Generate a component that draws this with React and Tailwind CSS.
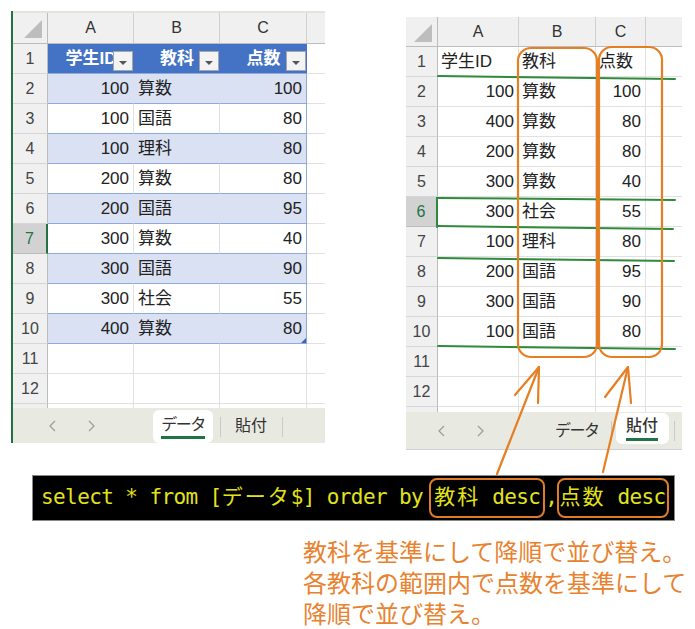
import React from "react";

const leftRows = [
  ["100", "算数", "100"],
  ["100", "国語", "80"],
  ["100", "理科", "80"],
  ["200", "算数", "80"],
  ["200", "国語", "95"],
  ["300", "算数", "40"],
  ["300", "国語", "90"],
  ["300", "社会", "55"],
  ["400", "算数", "80"],
];

const rightRows = [
  ["100", "算数", "100"],
  ["400", "算数", "80"],
  ["200", "算数", "80"],
  ["300", "算数", "40"],
  ["300", "社会", "55"],
  ["100", "理科", "80"],
  ["200", "国語", "95"],
  ["300", "国語", "90"],
  ["100", "国語", "80"],
];

const colHead =
  "h-full flex items-center justify-center bg-[#f0f0f0] border-r border-r-[#d0d0d0] border-b border-b-[#bcbcbc] text-[#333] text-[16px]";
const rowHead =
  "h-full flex items-center justify-center bg-[#f0f0f0] border-b border-b-[#d6d6d6] border-r border-r-[#bcbcbc] text-[#444] text-[16px]";
const rowHeadActive =
  "h-full flex items-center justify-center bg-[#d2d2d2] border-b border-b-[#bcbcbc] border-r-2 border-r-[#217346] text-[#217346] text-[16px]";
const gridCell = "h-full border-r border-r-[#e1e1e1] border-b border-b-[#e1e1e1]";

function Corner() {
  return (
    <svg width="18" height="18" viewBox="0 0 18 18">
      <path d="M18 0 L18 18 L0 18 Z" fill="#bdbdbd" />
    </svg>
  );
}

function ChevL() {
  return (
    <svg width="10" height="12" viewBox="0 0 10 12">
      <path d="M7 1 L2 6 L7 11" fill="none" stroke="#9e9e9e" strokeWidth="1.3" />
    </svg>
  );
}

function ChevR() {
  return (
    <svg width="10" height="12" viewBox="0 0 10 12">
      <path d="M3 1 L8 6 L3 11" fill="none" stroke="#9e9e9e" strokeWidth="1.3" />
    </svg>
  );
}

function FilterButton() {
  return (
    <div className="absolute right-[1px] top-[7px] w-[20px] h-[20px] bg-[#f3f3f3] border border-[#a6a6a6] flex items-end justify-center pb-[5px]">
      <svg width="8" height="4" viewBox="0 0 8 4">
        <path d="M0 0 L8 0 L4 4 Z" fill="#555" />
      </svg>
    </div>
  );
}

function LeftSheet() {
  return (
    <div className="mt-[11px] ml-[11px] w-[314px] border-l-2 border-l-[#217346] flex flex-col text-[17px] text-[#222]">
      <div className="h-[2px] bg-[#e4e4dc]" />
      <div className="flex h-[31px]">
        <div className="w-[35px] h-full flex items-end justify-end pr-[5px] pb-[5px] bg-[#f0f0f0] border-r border-r-[#bcbcbc] border-b border-b-[#bcbcbc]">
          <Corner />
        </div>
        <div className={colHead + " w-[86px]"}>A</div>
        <div className={colHead + " w-[86px]"}>B</div>
        <div className={colHead + " w-[87px]"}>C</div>
        <div className="w-[18px] h-full bg-[#f0f0f0] border-b border-b-[#bcbcbc]" />
      </div>

      <div className="flex h-[30px]">
        <div className={rowHead + " w-[35px]"}>1</div>
        <div className="relative w-[86px] h-full flex items-center justify-center bg-[#4472c4] text-white font-bold border-b border-b-[#8ea9db] overflow-hidden">
          <span className="whitespace-nowrap">学生ID</span>
          <FilterButton />
        </div>
        <div className="relative w-[86px] h-full flex items-center justify-center bg-[#4472c4] text-white font-bold border-b border-b-[#8ea9db]">
          <span className="whitespace-nowrap">教科</span>
          <FilterButton />
        </div>
        <div className="relative w-[87px] h-full flex items-center justify-center bg-[#4472c4] text-white font-bold border-b border-b-[#8ea9db]">
          <span className="whitespace-nowrap">点数</span>
          <FilterButton />
        </div>
        <div className="w-[18px] h-full border-b border-b-[#e1e1e1]" />
      </div>

      {leftRows.map((r, i) => {
        const n = i + 2;
        const band = n % 2 === 0;
        const bg = band ? "bg-[#d9e1f2]" : "bg-white";
        const inner = band ? "border-r-[#d9e1f2]" : "border-r-[#e1e1e1]";
        return (
          <div key={n} className="flex h-[30px]">
            <div className={(n === 7 ? rowHeadActive : rowHead) + " w-[35px]"}>{n}</div>
            <div className={`w-[86px] h-full flex items-center justify-end pr-[4px] border-r border-b border-b-[#8ea9db] ${bg} ${inner}`}>
              {r[0]}
            </div>
            <div className={`w-[86px] h-full flex items-center pl-[4px] border-r border-b border-b-[#8ea9db] ${bg} ${inner}`}>
              {r[1]}
            </div>
            <div className={`relative w-[87px] h-full flex items-center justify-end pr-[4px] border-r border-r-[#8ea9db] border-b border-b-[#8ea9db] ${bg}`}>
              {r[2]}
              {n === 10 && (
                <svg className="absolute right-0 bottom-0" width="5" height="5" viewBox="0 0 5 5">
                  <path d="M5 0 L5 5 L0 5 Z" fill="#3d63b8" />
                </svg>
              )}
            </div>
            <div className="w-[18px] h-full border-b border-b-[#e1e1e1]" />
          </div>
        );
      })}

      {[11, 12].map((n) => (
        <div key={n} className="flex h-[30px]">
          <div className={rowHead + " w-[35px]"}>{n}</div>
          <div className={gridCell + " w-[86px]"} />
          <div className={gridCell + " w-[86px]"} />
          <div className={gridCell + " w-[87px]"} />
          <div className="w-[18px] h-full border-b border-b-[#e1e1e1]" />
        </div>
      ))}
      <div className="flex h-[4px]">
        <div className="w-[35px] h-full bg-[#f0f0f0] border-r border-r-[#bcbcbc]" />
        <div className="w-[86px] h-full border-r border-r-[#e1e1e1]" />
        <div className="w-[86px] h-full border-r border-r-[#e1e1e1]" />
        <div className="w-[87px] h-full border-r border-r-[#e1e1e1]" />
      </div>

      <div className="flex items-start h-[35px] bg-[#e8e9e1] text-[16px] text-[#333]">
        <div className="w-[140px] h-full flex items-center">
          <span className="ml-[35px] flex"><ChevL /></span>
          <span className="ml-[28px] flex"><ChevR /></span>
        </div>
        <div className="mt-[2px] h-[33px] w-[60px] bg-white rounded-[6px] flex items-center justify-center">
          <span className="leading-[20px] pb-[1px] border-b-[3px] border-b-[#217346] tracking-[-1.5px]">データ</span>
        </div>
        <div className="ml-[7px] mt-[9px] w-px h-[20px] bg-[#c9c9c9]" />
        <div className="ml-[14px] h-full flex items-center">貼付</div>
        <div className="ml-[15px] mt-[9px] w-px h-[20px] bg-[#c9c9c9]" />
      </div>
    </div>
  );
}

function RightSheet() {
  return (
    <div className="mt-[17px] ml-[81px] w-[276px] flex flex-col text-[17px] text-[#222]">
      <div className="flex h-[30px]">
        <div className="w-[32px] h-full flex items-end justify-end pr-[5px] pb-[4px] bg-[#f0f0f0] border-r border-r-[#bcbcbc] border-b border-b-[#bcbcbc]">
          <Corner />
        </div>
        <div className={colHead + " w-[81px]"}>A</div>
        <div className={colHead + " w-[77px]"}>B</div>
        <div className={colHead + " w-[50px]"}>C</div>
        <div className="w-[36px] h-full bg-[#f0f0f0] border-b border-b-[#bcbcbc]" />
      </div>

      <div className="flex h-[30px]">
        <div className={rowHead + " w-[32px]"}>1</div>
        <div className={gridCell + " w-[81px] flex items-center pl-[3px] whitespace-nowrap"}>学生ID</div>
        <div className={gridCell + " w-[77px] flex items-center pl-[3px]"}>教科</div>
        <div className={gridCell + " w-[50px] flex items-center pl-[3px]"}>点数</div>
        <div className="w-[36px] h-full border-b border-b-[#e1e1e1]" />
      </div>

      {rightRows.map((r, i) => {
        const n = i + 2;
        return (
          <div key={n} className="flex h-[30px]">
            <div className={(n === 6 ? rowHeadActive : rowHead) + " w-[32px]"}>{n}</div>
            <div className={gridCell + " w-[81px] flex items-center justify-end pr-[4px]"}>{r[0]}</div>
            <div className={gridCell + " w-[77px] flex items-center pl-[3px]"}>{r[1]}</div>
            <div className={gridCell + " w-[50px] flex items-center justify-end pr-[4px]"}>{r[2]}</div>
            <div className="w-[36px] h-full border-b border-b-[#e1e1e1]" />
          </div>
        );
      })}

      {[11, 12].map((n) => (
        <div key={n} className="flex h-[30px]">
          <div className={rowHead + " w-[32px]"}>{n}</div>
          <div className={gridCell + " w-[81px]"} />
          <div className={gridCell + " w-[77px]"} />
          <div className={gridCell + " w-[50px]"} />
          <div className="w-[36px] h-full border-b border-b-[#e1e1e1]" />
        </div>
      ))}
      <div className="flex h-[5px]">
        <div className="w-[32px] h-full bg-[#f0f0f0] border-r border-r-[#bcbcbc]" />
        <div className="w-[81px] h-full border-r border-r-[#e1e1e1]" />
        <div className="w-[77px] h-full border-r border-r-[#e1e1e1]" />
        <div className="w-[50px] h-full border-r border-r-[#e1e1e1]" />
      </div>

      <div className="flex items-start h-[38px] bg-[#e8e9e1] border-b border-b-[#cfcfcf] text-[16px] text-[#333]">
        <span className="ml-[31px] h-[37px] flex items-center"><ChevL /></span>
        <span className="ml-[28px] h-[37px] flex items-center"><ChevR /></span>
        <div className="ml-[70px] h-[37px] flex items-center tracking-[-1.5px]">データ</div>
        <div className="ml-[12px] mt-[9px] w-px h-[20px] bg-[#c9c9c9]" />
        <div className="ml-[4px] mt-[1px] h-[31px] w-[53px] bg-white rounded-[6px] flex items-center justify-center">
          <span className="leading-[20px] pb-[2px] border-b-[3px] border-b-[#217346] font-medium">貼付</span>
        </div>
        <div className="ml-[5px] mt-[9px] w-px h-[20px] bg-[#c9c9c9]" />
      </div>
    </div>
  );
}

function CodeBar() {
  return (
    <div className="ml-[32px] mt-[25px] w-[643px] h-[46px] bg-black border border-[#8a8a8a] flex items-center pl-[8px] whitespace-pre text-[#e3e31b] font-['DejaVu_Sans_Mono','Noto_Sans_CJK_JP',monospace] text-[21px] tracking-[-0.6px]">
      <span>select * from [</span>
      <span className="tracking-[2px]">データ</span>
      <span>$] order by</span>
      <span className="ml-[6px] inline-flex items-center h-[40px] border-2 border-[#e07b27] rounded-[8px] pl-[3px] pr-[3px]">
        <span className="tracking-[2px]">教科</span>
        <span className="whitespace-pre"> desc</span>
      </span>
      <span>,</span>
      <span className="inline-flex items-center h-[40px] border-2 border-[#e07b27] rounded-[8px] pr-[1px]">
        <span className="tracking-[2px]">点数</span>
        <span className="whitespace-pre"> desc</span>
      </span>
    </div>
  );
}

function Caption() {
  return (
    <div className="ml-[303px] mt-[14px] text-[24px] leading-[31px] text-[#e8822f] font-['Noto_Sans_CJK_JP',sans-serif] whitespace-nowrap">
      <div>教科を基準にして降順で並び替え。</div>
      <div>各教科の範囲内で点数を基準にして</div>
      <div>降順で並び替え。</div>
    </div>
  );
}

function Annotations() {
  const green = "#2f8a3c";
  const orange = "#e67e22";
  return (
    <svg className="absolute top-0 left-0 pointer-events-none" width="695" height="629" viewBox="0 0 695 629">
      <g stroke={green} strokeWidth="2" fill="none" strokeLinecap="round">
        <path d="M438 76 L675 79" />
        <path d="M437 198 L675 200" />
        <path d="M437 198 L437 227" />
        <path d="M437 226 L673 229" />
        <path d="M438 258 L674 261" />
        <path d="M438 346 L675 349" />
      </g>
      <g stroke={orange} strokeWidth="2.2" fill="none" strokeLinecap="round" strokeLinejoin="round">
        <rect x="518" y="48" width="79" height="309" rx="13" />
        <rect x="599" y="47" width="63" height="310" rx="13" />
        <path d="M497 474 L539 367" />
        <path d="M515 395 L539 367 L538 403" />
        <path d="M603 472 L628 367" />
        <path d="M605 397 L628 367 L631 403" />
      </g>
    </svg>
  );
}

export default function App() {
  return (
    <div className="relative w-[695px] h-[629px] bg-white overflow-hidden font-['Liberation_Sans','Noto_Sans_CJK_JP',sans-serif]">
      <div className="flex items-start h-[450px]">
        <LeftSheet />
        <RightSheet />
      </div>
      <CodeBar />
      <Caption />
      <Annotations />
    </div>
  );
}
